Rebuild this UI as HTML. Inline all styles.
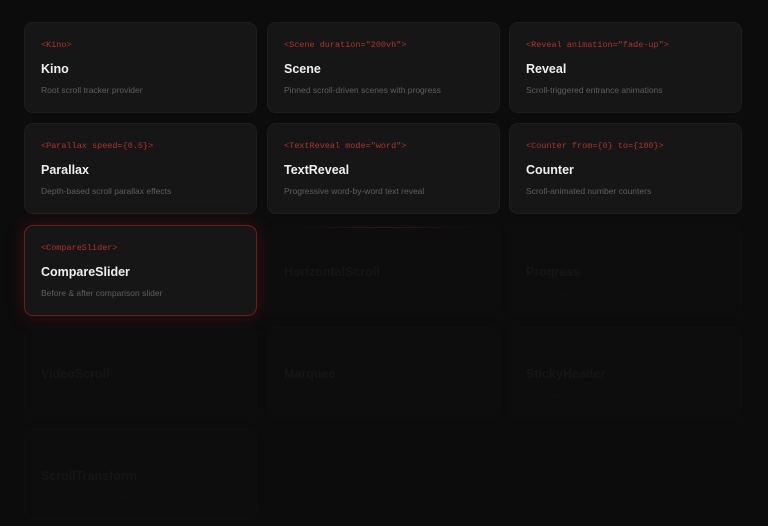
<!DOCTYPE html>
<html><head><style>
body{margin:0;width:768px;height:526px;background:#0c0c0c;overflow:hidden;font-family:"Liberation Sans",sans-serif;position:relative}
.c{position:absolute;width:233px;height:91px;box-sizing:border-box;background:#161616;border:1px solid #1d1d1d;border-radius:9px}
.t{position:absolute;left:16px;top:17px;font:8.5px "Liberation Mono",monospace;color:#b0322a;white-space:nowrap}
.h{position:absolute;left:16px;top:39px;font-weight:bold;font-size:12.5px;color:#eee}
.d{position:absolute;left:16px;top:62px;font-size:8.5px;color:#5e5e5e;white-space:nowrap}
.f{background:#0d0d0d;border-color:#0f0f0f}
.f .h{color:#151515}.f .d,.f .t{color:#101010}
.sel{border:1px solid #6e1c18;box-shadow:0 0 18px rgba(160,30,25,.3)}
</style></head><body>
<div class="c" style="left:24px;top:22px"><div class="t">&lt;Kino&gt;</div><div class="h">Kino</div><div class="d">Root scroll tracker provider</div></div>
<div class="c" style="left:267px;top:22px"><div class="t">&lt;Scene duration="200vh"&gt;</div><div class="h">Scene</div><div class="d">Pinned scroll-driven scenes with progress</div></div>
<div class="c" style="left:509px;top:22px"><div class="t">&lt;Reveal animation="fade-up"&gt;</div><div class="h">Reveal</div><div class="d">Scroll-triggered entrance animations</div></div>
<div class="c" style="left:24px;top:123px"><div class="t">&lt;Parallax speed={0.5}&gt;</div><div class="h">Parallax</div><div class="d">Depth-based scroll parallax effects</div></div>
<div class="c" style="left:267px;top:123px"><div class="t">&lt;TextReveal mode="word"&gt;</div><div class="h">TextReveal</div><div class="d">Progressive word-by-word text reveal</div></div>
<div class="c" style="left:509px;top:123px"><div class="t">&lt;Counter from={0} to={100}&gt;</div><div class="h">Counter</div><div class="d">Scroll-animated number counters</div></div>
<div class="c sel" style="left:24px;top:225px"><div class="t">&lt;CompareSlider&gt;</div><div class="h">CompareSlider</div><div class="d">Before &amp; after comparison slider</div></div>
<div class="c f" style="left:267px;top:225px"><div class="h">HorizontalScroll</div><div class="d">Horizontal scroll sections</div></div>
<div style="position:absolute;left:295px;top:227px;width:180px;height:1px;background:linear-gradient(90deg,transparent,#3a1418,transparent)"></div>
<div class="c f" style="left:509px;top:225px"><div class="h">Progress</div><div class="d">Scroll progress indicators</div></div>
<div class="c f" style="left:24px;top:327px"><div class="h">VideoScroll</div><div class="d">Scroll-scrubbed video</div></div>
<div class="c f" style="left:267px;top:327px"><div class="h">Marquee</div><div class="d">Scroll-linked marquee</div></div>
<div class="c f" style="left:509px;top:327px"><div class="h">StickyHeader</div><div class="d">Scroll-aware sticky header</div></div>
<div class="c f" style="left:24px;top:429px"><div class="h">ScrollTransform</div><div class="d">Scroll-driven transforms</div></div>
</body></html>
